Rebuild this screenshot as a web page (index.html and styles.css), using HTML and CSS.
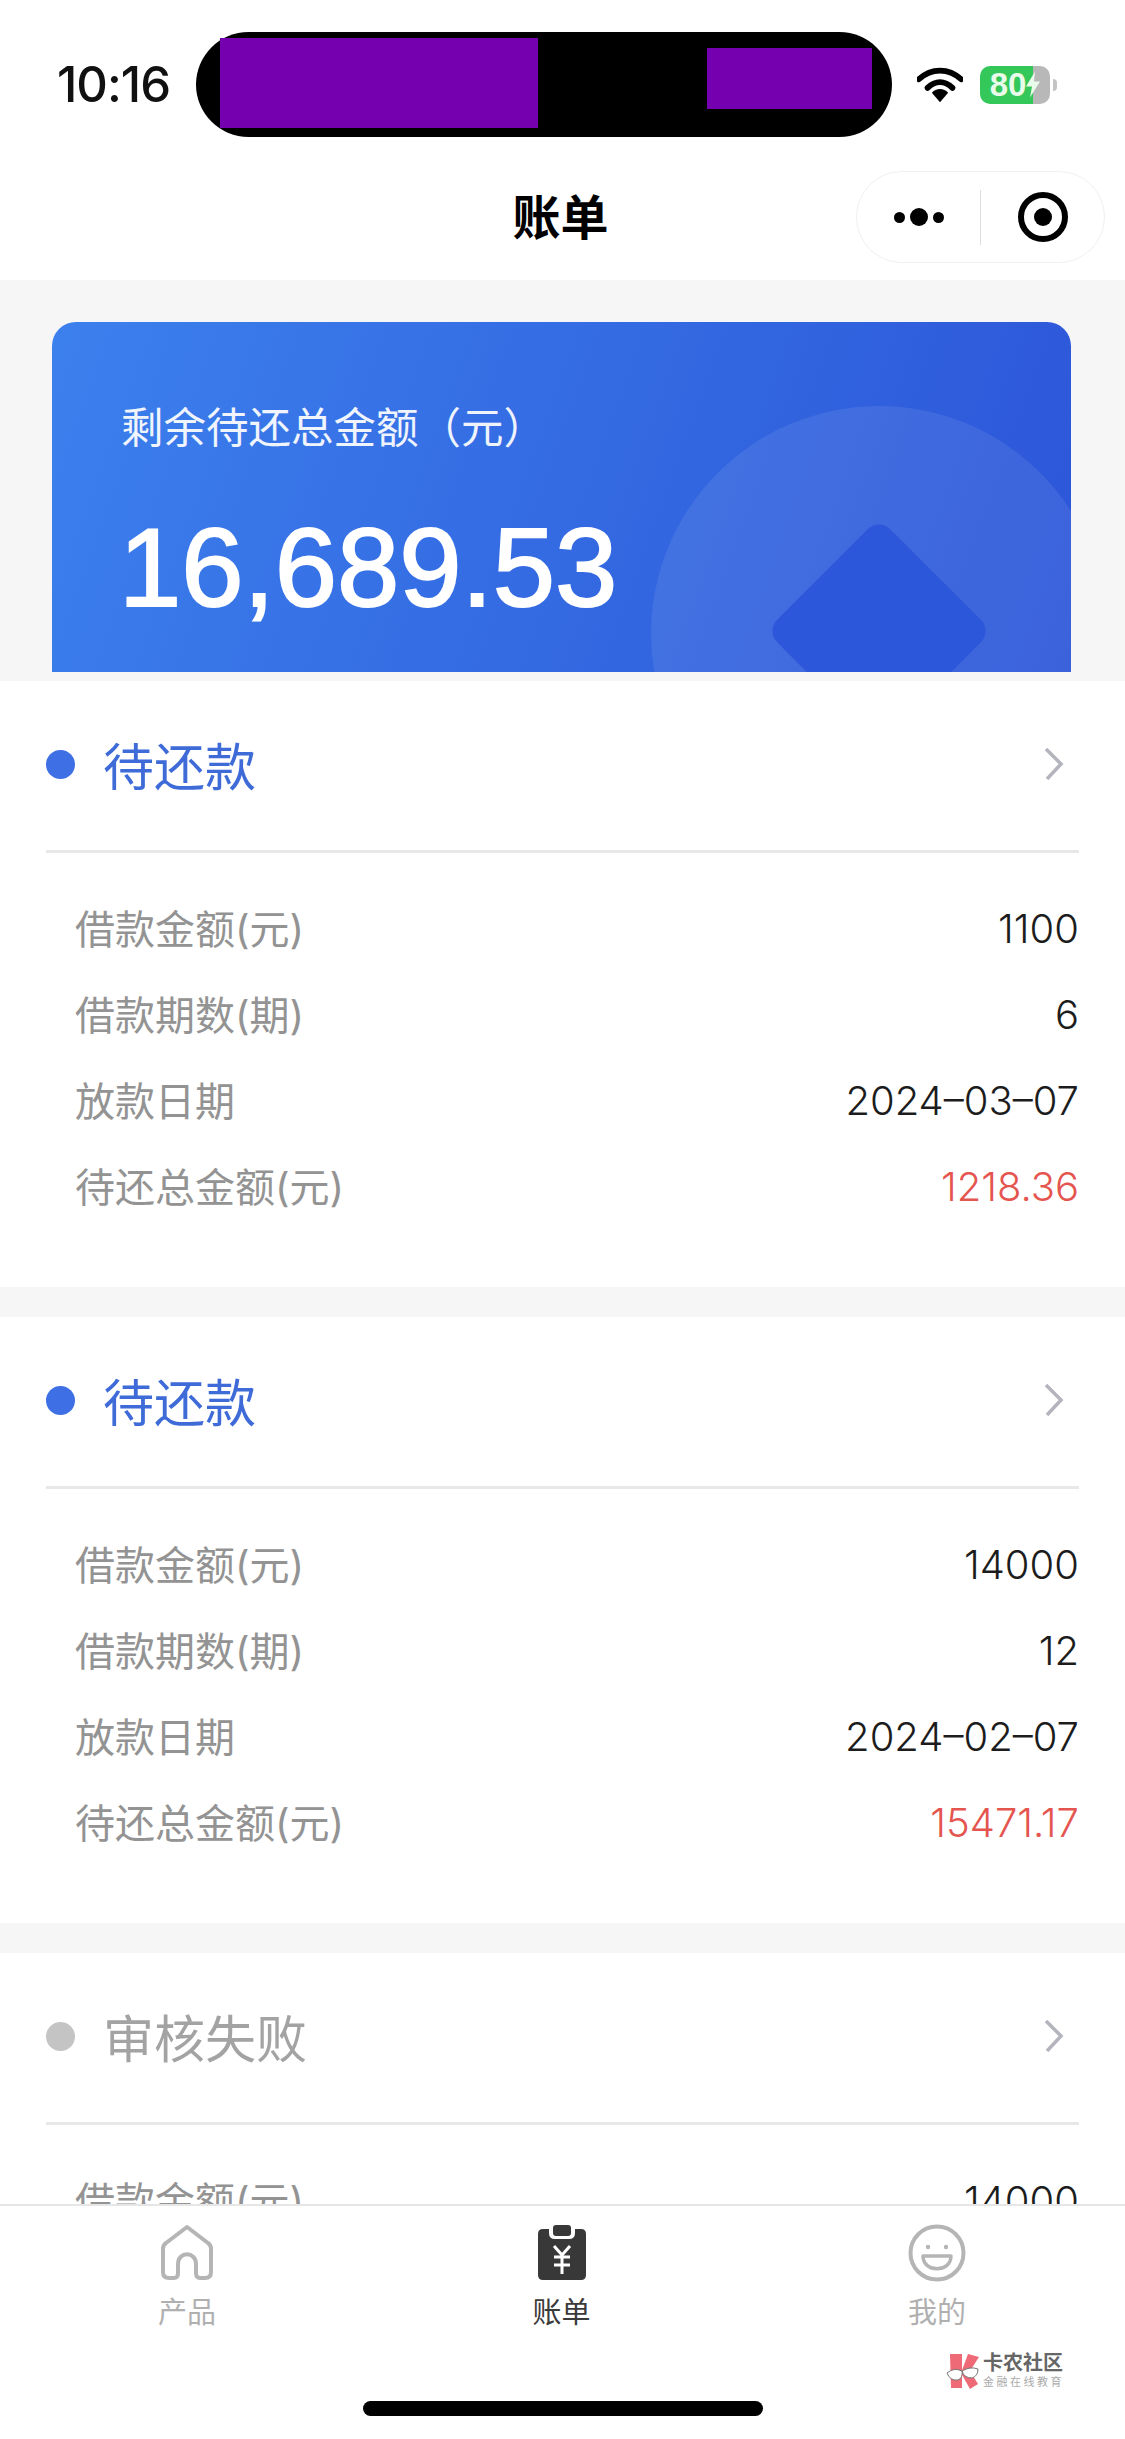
FILE: index.html
```html
<!DOCTYPE html>
<html lang="zh-CN">
  <head>
    <meta charset="UTF-8" />
    <meta name="viewport" content="width=device-width, initial-scale=1.0" />
    <title>账单</title>
    <link rel="stylesheet" href="styles.css">
  </head>
  <body>
    <div class="page">
      <div class="top">
        <div class="status-bar">
          <span class="time">10:16</span>
          <div class="island">
            <div class="mask mask-left"></div>
            <div class="mask mask-right"></div>
          </div>
          <svg class="wifi" viewBox="0 0 48 36">
            <path d="M2 12C15 0 33 0 46 12" fill="none" stroke="#000" stroke-width="6" stroke-linecap="round" />
            <path d="M11 21C19 13 29 13 37 21" fill="none" stroke="#000" stroke-width="6" stroke-linecap="round" />
            <path d="M15.500 26C20 21 28 21 32.500 26L24 36Z" />
          </svg>
          <div class="battery">
            <span class="battery-num">80</span>
            <svg class="bolt" viewBox="0 0 14 26"><path d="M9 0L0 15H6L4 26L14 10H8Z" /></svg>
          </div>
          <div class="battery-cap"></div>
        </div>
        <div class="nav-bar">
          <h1 class="nav-title">账单</h1>
          <div class="capsule">
            <div class="capsule-dots">
              <span class="dot-s"></span><span class="dot-l"></span><span class="dot-s"></span>
            </div>
            <div class="capsule-line"></div>
            <div class="capsule-target"><span></span></div>
          </div>
        </div>
      </div>

      <div class="summary-wrap">
        <div class="summary">
          <div class="summary-circle"></div>
          <div class="summary-diamond"></div>
          <p class="summary-label">剩余待还总金额（元）</p>
          <p class="summary-amount">16,689.53</p>
        </div>
      </div>

      <div class="bill">
        <div class="bill-head">
          <span class="bill-dot"></span>
          <span class="bill-status">待还款</span>
          <svg class="chevron" viewBox="0 0 20 32"><path d="M2 1L17 16L3 31" /></svg>
        </div>
        <div class="bill-rows">
          <div class="row"><span>借款金额(元)</span><span class="val">1100</span></div>
          <div class="row"><span>借款期数(期)</span><span class="val">6</span></div>
          <div class="row"><span>放款日期</span><span class="val">2024–03–07</span></div>
          <div class="row"><span>待还总金额(元)</span><span class="val val-red">1218.36</span></div>
        </div>
      </div>

      <div class="bill">
        <div class="bill-head">
          <span class="bill-dot"></span>
          <span class="bill-status">待还款</span>
          <svg class="chevron" viewBox="0 0 20 32"><path d="M2 1L17 16L3 31" /></svg>
        </div>
        <div class="bill-rows">
          <div class="row"><span>借款金额(元)</span><span class="val">14000</span></div>
          <div class="row"><span>借款期数(期)</span><span class="val">12</span></div>
          <div class="row"><span>放款日期</span><span class="val">2024–02–07</span></div>
          <div class="row"><span>待还总金额(元)</span><span class="val val-red">15471.17</span></div>
        </div>
      </div>

      <div class="bill">
        <div class="bill-head">
          <span class="bill-dot bill-dot-gray"></span>
          <span class="bill-status bill-status-gray">审核失败</span>
          <svg class="chevron" viewBox="0 0 20 32"><path d="M2 1L17 16L3 31" /></svg>
        </div>
        <div class="bill-rows">
          <div class="row"><span>借款金额(元)</span><span class="val">14000</span></div>
        </div>
      </div>

      <div class="tabbar">
        <div class="tabs">
          <div class="tab">
            <svg class="tab-icon" viewBox="0 0 58 58">
              <path d="M29 3L50 19Q53 21 53 25V48Q53 54 47 54H42Q38 54 38 49V40C38 27 20 27 20 40V49Q20 54 16 54H11Q5 54 5 48V25Q5 21 8 19Z" fill="none" stroke="#b5b5b5" stroke-width="4" stroke-linejoin="round" />
            </svg>
            <span>产品</span>
          </div>
          <div class="tab tab-active">
            <svg class="tab-icon" viewBox="0 0 58 58">
              <path d="M10 5H16V9Q16 15 22 15H36Q42 15 42 9V5H48Q53 5 53 10V51Q53 56 48 56H10Q5 56 5 51V10Q5 5 10 5Z" fill="#383838" />
              <rect x="20" y="1" width="18" height="11" rx="3" fill="#383838" />
              <path d="M21 22L29 31L37 22M21 33H37M21 41H37M29 31V50" fill="none" stroke="#fff" stroke-width="3" />
            </svg>
            <span>账单</span>
          </div>
          <div class="tab">
            <svg class="tab-icon" viewBox="0 0 58 58">
              <circle cx="29" cy="29" r="26.500" fill="none" stroke="#b5b5b5" stroke-width="4" />
              <circle cx="20" cy="23" r="2.200" fill="#b5b5b5" />
              <circle cx="38" cy="23" r="2.200" fill="#b5b5b5" />
              <path d="M15 32H43C43 49 15 49 15 32Z" fill="none" stroke="#b5b5b5" stroke-width="3.500" stroke-linejoin="round" />
            </svg>
            <span>我的</span>
          </div>
        </div>
        <div class="watermark">
          <svg class="watermark-logo" viewBox="0 0 36 36">
            <path d="M5 1H17V35H6Z" fill="#ee6a76" />
            <path d="M23 1L34 4L25 18L33 31L25 36L16 20Z" fill="#ee6a76" />
            <path d="M2 20Q9 14 17 18Q18 25 13 27Q5 28 2 20Z" fill="#fff" stroke="#777" stroke-width="1" />
            <path d="M17 18Q25 13 33 16Q33 23 27 25Q19 25 17 18Z" fill="#fff" stroke="#777" stroke-width="1" />
          </svg>
          <div class="watermark-text">
            <span class="watermark-name">卡农社区</span>
            <span class="watermark-sub">金融在线教育</span>
          </div>
        </div>
        <div class="home-bar"></div>
      </div>
    </div>
  </body>
</html>
```

FILE: styles.css
```css
* {
  margin: 0;
  padding: 0;
  box-sizing: border-box;
}

html,
body {
  width: 1125px;
  height: 2439px;
  overflow: hidden;
}

body {
  font-family: "Inter", "Noto Sans CJK SC", sans-serif;
  background: #f6f6f6;
  color: #222;
}

.page {
  position: relative;
  width: 1125px;
  height: 2439px;
  overflow: hidden;
}

.top {
  background: #fff;
  height: 280px;
}

.status-bar {
  display: flex;
  align-items: center;
  height: 137px;
  padding: 32px 0 0 57px;
}

.time {
  width: 139px;
  font-size: 49px;
  font-weight: 500;
  letter-spacing: -1px;
  color: #111;
}

.island {
  display: flex;
  justify-content: space-between;
  width: 696px;
  height: 105px;
  padding: 6px 20px 0 24px;
  background: #000;
  border-radius: 53px;
}

.mask {
  background: #7500b0;
}

.mask-left {
  width: 318px;
  height: 90px;
}

.mask-right {
  width: 165px;
  height: 61px;
  margin-top: 10px;
}

.wifi {
  width: 46px;
  height: 36px;
  margin: 0 0 0 25px;
  fill: #000;
}

.battery {
  display: flex;
  align-items: center;
  justify-content: center;
  gap: 0;
  width: 70px;
  height: 38px;
  margin-left: 17px;
  border-radius: 10px;
  background: linear-gradient(90deg, #34c759 0, #34c759 76%, #b8b8b8 76%);
}

.battery-num {
  font-family: "Liberation Sans", sans-serif;
  font-size: 33px;
  font-weight: 700;
  color: #e9fbe9;
}

.bolt {
  width: 14px;
  height: 27px;
  fill: #e9fbe9;
}

.battery-cap {
  width: 4px;
  height: 12px;
  margin-left: 3px;
  background: #c4c4c4;
  border-radius: 0 5px 5px 0;
}

.nav-bar {
  position: relative;
  display: flex;
  align-items: center;
  justify-content: center;
  height: 143px;
  padding: 10px 4px 0 0;
}

.nav-title {
  font-size: 48px;
  font-weight: 700;
  color: #000;
}

.capsule {
  position: absolute;
  top: 34px;
  left: 856px;
  display: flex;
  align-items: center;
  width: 249px;
  height: 92px;
  background: #fff;
  border: 1px solid #f0f0f0;
  border-radius: 46px;
}

.capsule-dots {
  display: flex;
  align-items: center;
  justify-content: center;
  gap: 5px;
  width: 123px;
}

.dot-s {
  width: 11px;
  height: 11px;
  background: #000;
  border-radius: 50%;
}

.dot-l {
  width: 18px;
  height: 18px;
  background: #000;
  border-radius: 50%;
}

.capsule-line {
  width: 1px;
  height: 55px;
  background: #ddd;
}

.capsule-target {
  display: flex;
  align-items: center;
  justify-content: center;
  width: 50px;
  height: 50px;
  margin-left: 37px;
  border: 6px solid #000;
  border-radius: 50%;
}

.capsule-target span {
  width: 18px;
  height: 18px;
  background: #000;
  border-radius: 50%;
}

.summary-wrap {
  height: 401px;
  padding: 42px 54px 9px 52px;
}

.summary {
  position: relative;
  height: 350px;
  padding: 83px 0 0 69px;
  overflow: hidden;
  color: #fff;
  background: linear-gradient(110deg, #3c80ed 0%, #2c55d8 100%);
  border-radius: 24px 24px 0 0;
}

.summary-circle {
  position: absolute;
  top: 84px;
  left: 599px;
  width: 456px;
  height: 456px;
  background: rgba(255, 255, 255, 0.08);
  border-radius: 50%;
}

.summary-diamond {
  position: absolute;
  top: 229px;
  left: 747px;
  width: 160px;
  height: 160px;
  background: #2d57da;
  border-radius: 16px;
  transform: rotate(45deg);
}

.summary-label {
  position: relative;
  font-size: 42.500px;
  line-height: 46px;
  opacity: 0.92;
}

.summary-amount {
  position: relative;
  margin-top: 54px;
  margin-left: -2px;
  font-family: "Liberation Sans", sans-serif;
  font-size: 112px;
  line-height: 126px;
  -webkit-text-stroke: 2px #fff;
}

.bill {
  height: 606px;
  margin-bottom: 30px;
  padding: 0 46px;
  background: #fff;
}

.bill-head {
  display: flex;
  align-items: center;
  height: 172px;
  padding-bottom: 3px;
  border-bottom: 3px solid #e8e8e8;
}

.bill-dot {
  width: 29px;
  height: 29px;
  margin-right: 28px;
  background: #3e6fe4;
  border-radius: 50%;
}

.bill-dot-gray {
  background: #c4c4c4;
}

.bill-status {
  flex: 1;
  font-size: 51px;
  color: #3e6bd8;
}

.bill-status-gray {
  color: #a3a3a3;
}

.chevron {
  width: 20px;
  height: 32px;
  margin-right: 15px;
  fill: none;
  stroke: #b4b4bd;
  stroke-width: 3.500;
}

.bill-rows {
  padding: 31px 0 0 29px;
}

.row {
  display: flex;
  justify-content: space-between;
  align-items: center;
  height: 86px;
  font-size: 40px;
  color: #939393;
}

.val {
  padding-top: 3px;
  font-size: 40px;
  font-weight: 300;
  color: #1c1c1c;
}

.val-red {
  color: #e5554f;
}

.tabbar {
  position: absolute;
  left: 0;
  right: 0;
  bottom: 0;
  height: 235px;
  background: #fff;
  border-top: 2px solid #e6e6e6;
}

.tabs {
  display: grid;
  grid-template-columns: 374px 375px 376px;
  padding-top: 18px;
}

.tab {
  display: flex;
  flex-direction: column;
  align-items: center;
  gap: 13px;
  font-size: 29px;
  line-height: 36px;
  color: #b0b0b0;
}

.tab-active {
  color: #3a3a3a;
}

.tab-icon {
  width: 58px;
  height: 58px;
}

.watermark {
  position: absolute;
  top: 146px;
  left: 945px;
  display: flex;
  align-items: center;
  gap: 2px;
}

.watermark-logo {
  width: 36px;
  height: 36px;
}

.watermark-text {
  display: flex;
  flex-direction: column;
}

.watermark-name {
  font-size: 20px;
  font-weight: 700;
  line-height: 23px;
  color: #666;
}

.watermark-sub {
  font-size: 11px;
  line-height: 14px;
  letter-spacing: 2.500px;
  color: #aaa;
}

.home-bar {
  position: absolute;
  left: 363px;
  top: 195px;
  width: 400px;
  height: 15px;
  background: #000;
  border-radius: 8px;
}
```
